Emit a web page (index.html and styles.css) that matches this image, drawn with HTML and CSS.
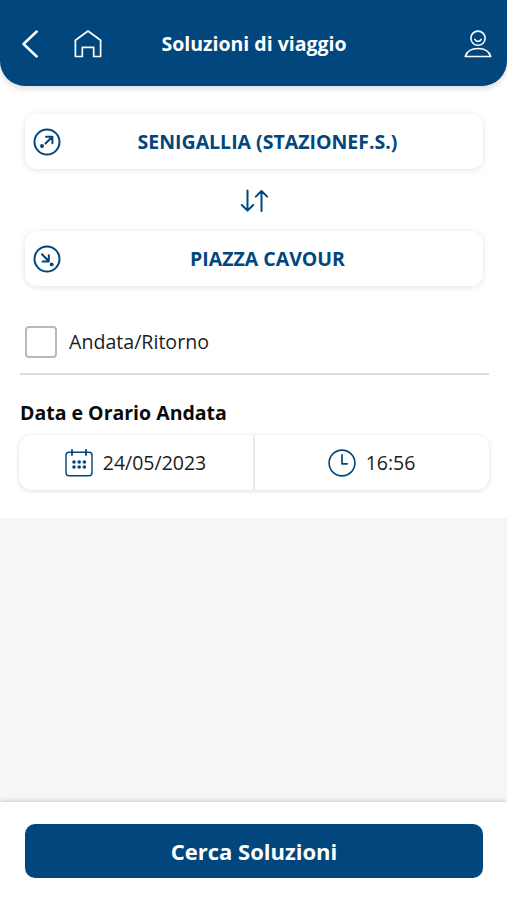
FILE: index.html
```html
<!DOCTYPE html>
<html lang="it">
<head>
<meta charset="utf-8">
<meta name="viewport" content="width=device-width, initial-scale=1">
<title>Soluzioni di viaggio</title>
<link rel="stylesheet" href="styles.css">
</head>
<body>
<div class="app">
  <div class="sheet">
    <header class="topbar">
      <div class="topbar-left">
        <svg class="icon back" width="18" height="30" viewBox="0 0 18 30"><path d="M15.7 2.5 2.5 15l13.2 12.5" stroke-width="2.5"/></svg>
        <svg class="icon" width="28" height="30" viewBox="0 0 28 30"><path d="M14 2 1.4 11.3v16.2h6.9v-9.2h11.4v9.2h6.9V11.3z" stroke-width="1.7"/></svg>
      </div>
      <h1 class="title">Soluzioni di viaggio</h1>
      <svg class="icon user" width="28" height="30" viewBox="0 0 28 30"><circle cx="14" cy="9.2" r="7.1" stroke-width="1.6"/><path d="M10.8 10.4c1.3 2.6 5.1 2.6 6.4 0M1.3 27.5c1.4-4.8 6.2-8 12.7-8s11.3 3.2 12.7 8z" stroke-width="1.6"/></svg>
    </header>
    <main class="form">
      <button class="field">
        <svg class="icon" width="28" height="28" viewBox="0 0 28 28"><circle cx="14" cy="14" r="12.5" stroke-width="2"/><path d="m12.5 15.5 6.5-6.5M13 8.8h6.4v6.4" stroke-width="2"/><circle class="dot" cx="9" cy="18" r="2"/></svg>
        <span>SENIGALLIA (STAZIONEF.S.)</span>
      </button>
      <button class="swap" aria-label="Inverti">
        <svg class="icon" width="28" height="24" viewBox="0 0 28 24"><path d="M7.5 1.5v20M1.8 16l5.7 5.6 5.7-5.6M21.5 22V2M15.8 7.6 21.5 2l5.7 5.6" stroke-width="2"/></svg>
      </button>
      <button class="field">
        <svg class="icon" width="28" height="28" viewBox="0 0 28 28"><circle cx="14" cy="14" r="12.5" stroke-width="2"/><path d="m9 9.2 6.3 6.6M15.8 10.3v6.2H9.6" stroke-width="2"/><circle class="dot" cx="18.7" cy="19.4" r="1.9"/></svg>
        <span>PIAZZA CAVOUR</span>
      </button>
      <label class="roundtrip"><input class="check" type="checkbox"><span>Andata/Ritorno</span></label>
      <h2 class="subtitle">Data e Orario Andata</h2>
      <div class="when">
        <button class="slot">
          <svg class="icon" width="28" height="28" viewBox="0 0 28 28"><rect x="1" y="3.3" width="26" height="23.5" rx="3" stroke-width="1.4"/><path d="M7 1v5M21 1v5" stroke-width="1.8"/><g class="dot"><circle cx="9" cy="13" r="1.8"/><circle cx="14.2" cy="13" r="1.8"/><circle cx="19.4" cy="13" r="1.8"/><circle cx="9" cy="18" r="1.8"/><circle cx="14.2" cy="18" r="1.8"/><circle cx="19.4" cy="18" r="1.8"/></g></svg>
          <span>24/05/2023</span>
        </button>
        <button class="slot">
          <svg class="icon" width="28" height="28" viewBox="0 0 28 28"><circle cx="14" cy="14" r="12.9" stroke-width="1.6"/><path d="M14 5.8v9h5.2" stroke-width="1.7"/></svg>
          <span>16:56</span>
        </button>
      </div>
    </main>
  </div>
  <footer class="footer"><button class="submit">Cerca Soluzioni</button></footer>
</div>
</body>
</html>
```
FILE: styles.css
```css
* { box-sizing: border-box; }
body {
  margin: 0;
  font-family: "Open Sans", "Noto Sans", sans-serif;
  color: #1c1c1c;
}
button {
  margin: 0;
  padding: 0;
  border: 0;
  background: none;
  font: inherit;
  color: inherit;
}
.app {
  display: flex;
  flex-direction: column;
  height: 900px;
  background: #f6f6f6;
}
.sheet { height: 518px; background: #fff; }
.icon {
  display: block;
  flex: none;
  fill: none;
  stroke: currentColor;
  stroke-linecap: round;
  stroke-linejoin: round;
}
.dot, .dot circle { fill: currentColor; stroke: none; }
.topbar {
  display: grid;
  grid-template-columns: 1fr auto 1fr;
  align-items: center;
  height: 86px;
  padding: 2px 15px 0 16px;
  background: #01477d;
  color: #fff;
  border-radius: 0 0 25px 25px;
  box-shadow: 0 2px 7px rgba(0, 0, 0, .16);
}
.topbar-left { display: flex; gap: 35px; padding-left: 5px; }
.title {
  margin: 0 0 2px;
  font-size: 19.5px;
  font-weight: 700;
  white-space: nowrap;
}
.user { justify-self: end; }
.form { padding: 28px 18px 0 19px; }
.field {
  display: grid;
  grid-template-columns: 28px 1fr;
  align-items: center;
  width: 458px;
  height: 55px;
  margin-left: 6px;
  padding: 0 9px 0 8px;
  border-radius: 12px;
  background: #fff;
  box-shadow: 0 1px 6px rgba(0, 0, 0, .12);
  color: #01477d;
  font-size: 19.5px;
  font-weight: 700;
}
.swap {
  display: flex;
  justify-content: center;
  align-items: center;
  width: 100%;
  height: 62px;
  padding-top: 2px;
  color: #01477d;
}
.roundtrip {
  display: flex;
  align-items: center;
  gap: 12px;
  height: 89px;
  margin: 0 0 0 1px;
  padding: 24px 0 0 5px;
  border-bottom: 2px solid #dcdcdc;
  font-size: 19.6px;
}
.check {
  appearance: none;
  width: 32px;
  height: 32px;
  margin: 0;
  border: 2px solid #b9b9b9;
  border-radius: 4px;
  background: #fff;
}
.subtitle {
  margin: 24px 0 8px 1px;
  font-size: 19.5px;
  line-height: 28px;
  font-weight: 700;
  color: #090909;
}
.when {
  display: grid;
  grid-template-columns: 234px 1fr;
  height: 55px;
  border-radius: 13px;
  background: #fff;
  box-shadow: 0 1px 5px rgba(0, 0, 0, .14);
}
.slot {
  display: flex;
  align-items: center;
  justify-content: center;
  gap: 10px;
  padding-right: 1px;
  font-size: 19.5px;
}
.slot + .slot { border-left: 2px solid #ebebeb; }
.slot .icon { color: #01477d; }
.footer {
  height: 98px;
  margin-top: auto;
  padding: 22px 24px 0 25px;
  background: #fff;
  box-shadow: 0 0 5px rgba(0, 0, 0, .25);
}
.submit {
  display: block;
  width: 100%;
  height: 54px;
  border-radius: 10px;
  background: #01477d;
  color: #fff;
  font-size: 22px;
  font-weight: 700;
}
```
